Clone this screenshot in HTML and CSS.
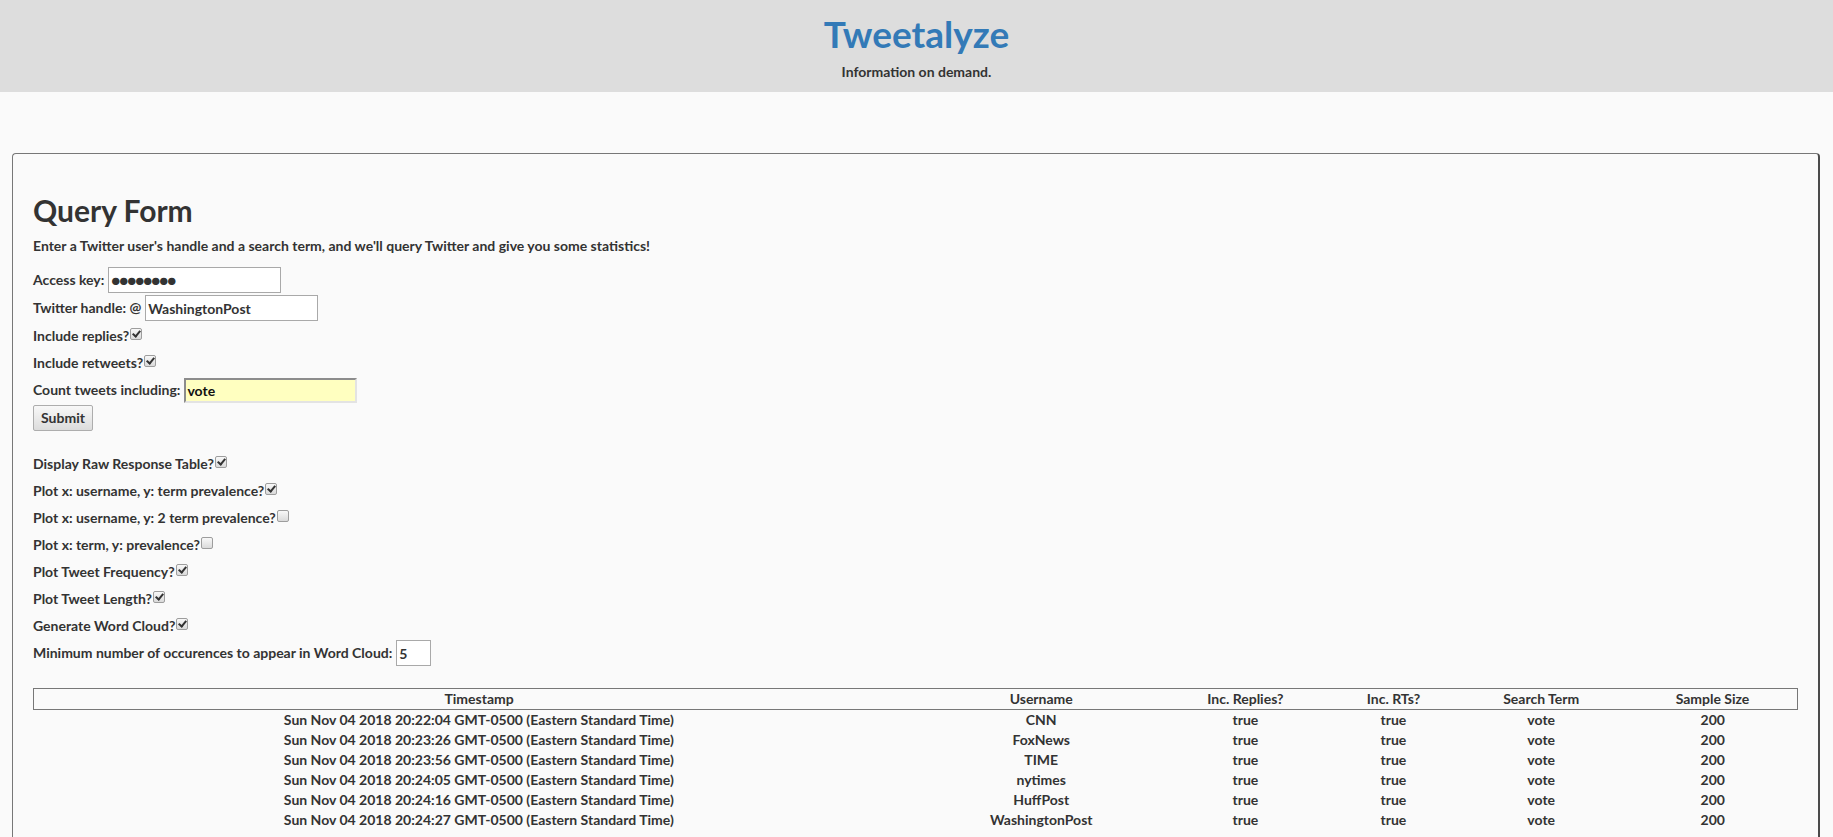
FILE: index.html
```html
<!DOCTYPE html>
<html lang="en">
<head>
<meta charset="utf-8">
<title>Tweetalyze</title>
<link rel="stylesheet" href="styles.css">
</head>
<body>
<header class="site-header">
  <h1 class="brand">Tweetalyze</h1>
  <p class="tagline">Information on demand.</p>
</header>
<main class="card">
  <h2 class="card-title">Query Form</h2>
  <p class="intro">Enter a Twitter user's handle and a search term, and we'll query Twitter and give you some statistics!</p>
  <form class="query-form">
    <div class="row"><label>Access key:</label><input class="text-input dots" type="text" value="●●●●●●●●"></div>
    <div class="row"><label>Twitter handle: @</label><input class="text-input" type="text" value="WashingtonPost"></div>
    <div class="row check-row"><label>Include replies?</label><input class="check-input" type="checkbox" checked></div>
    <div class="row check-row"><label>Include retweets?</label><input class="check-input" type="checkbox" checked></div>
    <div class="row"><label>Count tweets including:</label><input class="text-input highlight" type="text" value="vote"></div>
    <div class="row"><button class="submit" type="button">Submit</button></div>
  </form>
  <div class="options">
    <div class="row check-row"><label>Display Raw Response Table?</label><input class="check-input" type="checkbox" checked></div>
    <div class="row check-row"><label>Plot x: username, y: term prevalence?</label><input class="check-input" type="checkbox" checked></div>
    <div class="row check-row"><label>Plot x: username, y: 2 term prevalence?</label><input class="check-input" type="checkbox"></div>
    <div class="row check-row"><label>Plot x: term, y: prevalence?</label><input class="check-input" type="checkbox"></div>
    <div class="row check-row"><label>Plot Tweet Frequency?</label><input class="check-input" type="checkbox" checked></div>
    <div class="row check-row"><label>Plot Tweet Length?</label><input class="check-input" type="checkbox" checked></div>
    <div class="row check-row"><label>Generate Word Cloud?</label><input class="check-input" type="checkbox" checked></div>
    <div class="row"><label>Minimum number of occurences to appear in Word Cloud:</label><input class="text-input small" type="text" value="5"></div>
  </div>
  <table class="results">
    <thead>
      <tr><th>Timestamp</th><th>Username</th><th>Inc. Replies?</th><th>Inc. RTs?</th><th>Search Term</th><th>Sample Size</th></tr>
    </thead>
    <tbody>
      <tr><td>Sun Nov 04 2018 20:22:04 GMT-0500 (Eastern Standard Time)</td><td>CNN</td><td>true</td><td>true</td><td>vote</td><td>200</td></tr>
      <tr><td>Sun Nov 04 2018 20:23:26 GMT-0500 (Eastern Standard Time)</td><td>FoxNews</td><td>true</td><td>true</td><td>vote</td><td>200</td></tr>
      <tr><td>Sun Nov 04 2018 20:23:56 GMT-0500 (Eastern Standard Time)</td><td>TIME</td><td>true</td><td>true</td><td>vote</td><td>200</td></tr>
      <tr><td>Sun Nov 04 2018 20:24:05 GMT-0500 (Eastern Standard Time)</td><td>nytimes</td><td>true</td><td>true</td><td>vote</td><td>200</td></tr>
      <tr><td>Sun Nov 04 2018 20:24:16 GMT-0500 (Eastern Standard Time)</td><td>HuffPost</td><td>true</td><td>true</td><td>vote</td><td>200</td></tr>
      <tr><td>Sun Nov 04 2018 20:24:27 GMT-0500 (Eastern Standard Time)</td><td>WashingtonPost</td><td>true</td><td>true</td><td>vote</td><td>200</td></tr>
    </tbody>
  </table>
</main>
</body>
</html>
```

FILE: styles.css
```css
body {
  margin: 0;
  background: #fafafa;
  font-family: Lato, "Open Sans", sans-serif;
  font-size: 14px;
  line-height: 20px;
  font-weight: 700;
  color: #333;
}

.site-header {
  box-sizing: border-box;
  height: 92px;
  padding-top: 14px;
  background: #dddddd;
  text-align: center;
}

.brand {
  margin: 0;
  font-size: 37px;
  line-height: 40px;
  font-weight: 700;
  color: #337ab7;
}

.tagline {
  margin: 8px 0 0;
}

.card {
  margin: 61px 13px 0 12px;
  padding: 20px 20px 40px;
  border: 1px solid #777;
  border-right: 2px solid #4a4a4a;
  border-radius: 4px 4px 0 0;
}

.card-title {
  margin: 20px 0 10px;
  font-size: 30px;
  line-height: 32px;
  font-weight: 700;
}

.intro {
  margin: 0 0 10px;
}

.query-form,
.options {
  display: flex;
  flex-direction: column;
}

.options {
  margin-top: 18px;
}

.row {
  display: flex;
  align-items: center;
  height: 28px;
}

.check-row {
  height: 27px;
}

.text-input {
  box-sizing: border-box;
  width: 173px;
  height: 26px;
  margin: 0 0 0 4px;
  padding: 0 2px;
  border: 1px solid #a9a9a9;
  background: #fff;
  font: inherit;
  color: #333;
  outline: none;
}

.text-input.dots {
  font-size: 15px;
  letter-spacing: -1px;
}

.text-input.highlight {
  height: 25px;
  border: 2px solid;
  border-color: #8c8c8c #e3e3e3 #e3e3e3 #8c8c8c;
  background: #ffffc0;
  color: #111;
  padding: 0 1px;
}

.text-input.small {
  width: 35px;
}

.check-input {
  appearance: none;
  -webkit-appearance: none;
  position: relative;
  box-sizing: border-box;
  width: 12px;
  height: 12px;
  margin: 0 0 3px 1px;
  border: 1px solid #9d9d9d;
  border-radius: 2px;
  background: linear-gradient(#f8f8f8, #dadada);
}

.check-input:checked::after {
  content: "";
  position: absolute;
  left: 3px;
  top: 0;
  width: 3px;
  height: 6px;
  border: solid #333;
  border-width: 0 2px 2px 0;
  transform: rotate(40deg);
}

.submit {
  box-sizing: border-box;
  width: 60px;
  height: 26px;
  padding: 0;
  border: 1px solid #adadad;
  border-radius: 2px;
  background: linear-gradient(#f8f8f8, #dcdcdc);
  font: inherit;
  color: #333;
}

.results {
  width: 100%;
  margin-top: 21px;
  border-collapse: collapse;
}

.results thead tr {
  border: 1px solid #777;
}

.results th,
.results td {
  padding: 0;
  text-align: center;
  line-height: 20px;
  font-weight: 700;
}
```
